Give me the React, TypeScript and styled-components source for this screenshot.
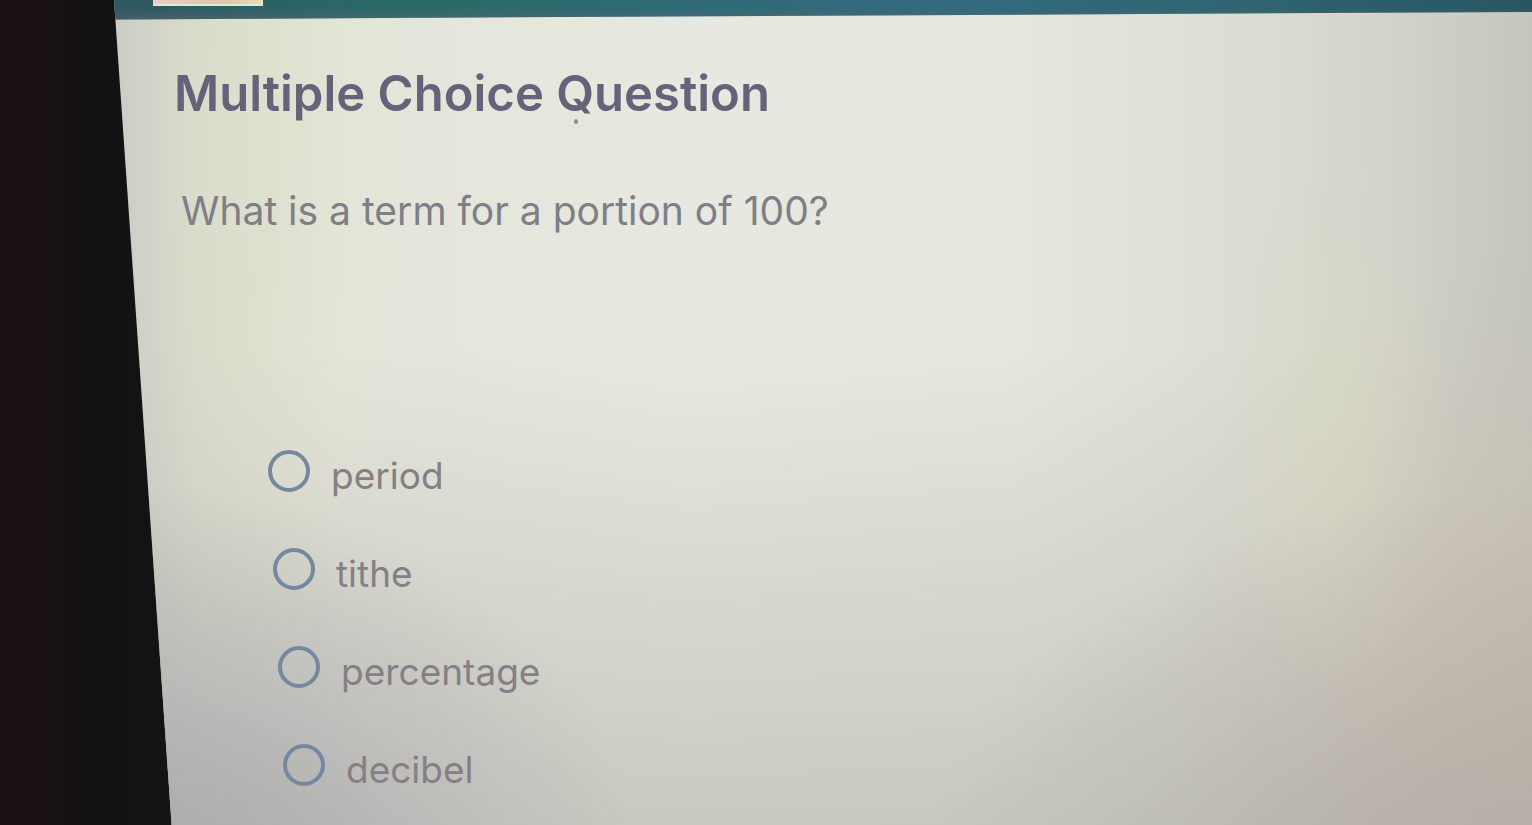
import React, { useState } from "react";
import styled, { createGlobalStyle } from "styled-components";

const GlobalStyle = createGlobalStyle`
  *, *::before, *::after { box-sizing: border-box; }
  body { margin: 0; background: #121011; }
`;

const Monitor = styled.div`
  min-height: 100vh;
  display: flex;
  background: linear-gradient(90deg, #1c1014 0, #171113 60px, #101110 100px, #141414 172px);
`;

const Screen = styled.div`
  flex: 1;
  display: flex;
  flex-direction: column;
  font-family: Inter, "Liberation Sans", sans-serif;
  clip-path: polygon(114px 0, 100% 0, 100% 100%, 172px 100%);
  background:
    radial-gradient(ellipse 8% 34% at 87% 50%, rgba(218, 220, 190, 0.4), rgba(218, 220, 190, 0) 100%),
    radial-gradient(ellipse 22% 46% at 98% 76%, rgba(206, 180, 156, 0.3), rgba(206, 180, 156, 0) 100%),
    radial-gradient(ellipse 40% 50% at 100% 108%, rgba(156, 144, 144, 0.5), rgba(156, 144, 144, 0) 100%),
    radial-gradient(ellipse 32% 50% at 10% 108%, rgba(160, 158, 167, 0.75), rgba(160, 158, 167, 0) 100%),
    radial-gradient(ellipse 10% 70% at 16% 16%, rgba(222, 227, 198, 0.4), rgba(222, 227, 198, 0) 100%),
    linear-gradient(180deg, rgba(192, 193, 185, 0) 42%, rgba(192, 193, 185, 0.8) 100%),
    linear-gradient(90deg, #cbccc6 8%, #d9dacd 13%, #e3e5d9 22%, #e7e8df 45%, #e5e6dd 66%, #dadbd2 84%, #c5c6be 100%);
`;

const TopBar = styled.header`
  height: 20px;
  padding-left: 153px;
  clip-path: polygon(0 0, 100% 0, 100% 12px, 0 20px);
  background:
    linear-gradient(180deg, rgba(90, 100, 112, 0) 8px, rgba(90, 100, 112, 0.6) 20px),
    linear-gradient(90deg, #2f5862 8%, #2b6468 20%, #286a66 28%, #2f6a76 45%, #326a80 62%, #2f6470 82%, #285660 100%);
`;

const Tab = styled.div`
  width: 110px;
  height: 6px;
  background: linear-gradient(90deg, #e8d0c0, #dcc4ae 60%, #e6dcae);
  border-right: 2px solid #d4ecca;
  border-bottom: 2px solid #f2e2d2;
`;

const Content = styled.main`
  padding: 42px 48px 28px 174px;
`;

const Title = styled.h1`
  position: relative;
  margin: 0;
  font-size: 49px;
  line-height: 64px;
  font-weight: 600;
  color: #66627a;
`;

const Speck = styled.span`
  position: absolute;
  left: 400px;
  top: 57px;
  width: 4px;
  height: 5px;
  border-radius: 50%;
  background: #8a8890;
`;

const Quiz = styled.fieldset`
  margin: 53px 0 0;
  padding: 0 0 0 7px;
  border: 0;
  min-width: 0;
`;

const Question = styled.legend`
  padding: 0;
  font-size: 39px;
  line-height: 64px;
  font-weight: 400;
  color: #807e86;
`;

const Options = styled.div`
  display: flex;
  flex-direction: column;
  gap: 34px;
  padding: 201px 0 0 87px;
`;

const Option = styled.label<{ $row: number }>`
  display: flex;
  align-items: flex-start;
  gap: 21px;
  margin-left: ${({ $row }) => $row * 5}px;
  font-size: 37px;
  line-height: 64px;
  color: #867f83;
  cursor: pointer;
`;

const Radio = styled.input`
  appearance: none;
  flex: none;
  width: 42px;
  height: 42px;
  margin: 6px 0 0;
  border: 4px solid #7489a0;
  border-radius: 50%;
  background: transparent;
  cursor: pointer;

  &:checked {
    background: radial-gradient(circle, #7489a0 0 9px, transparent 10px);
  }
`;

const answers = ["period", "tithe", "percentage", "decibel"];

export default function App() {
  const [chosen, setChosen] = useState("");

  return (
    <Monitor>
      <GlobalStyle />
      <Screen>
        <TopBar>
          <Tab />
        </TopBar>
        <Content>
          <Title>
            Multiple Choice Question
            <Speck />
          </Title>
          <Quiz>
            <Question>What is a term for a portion of 100?</Question>
            <Options>
              {answers.map((answer, row) => (
                <Option key={answer} $row={row}>
                  <Radio
                    type="radio"
                    name="answer"
                    value={answer}
                    checked={chosen === answer}
                    onChange={() => setChosen(answer)}
                  />
                  {answer}
                </Option>
              ))}
            </Options>
          </Quiz>
        </Content>
      </Screen>
    </Monitor>
  );
}
